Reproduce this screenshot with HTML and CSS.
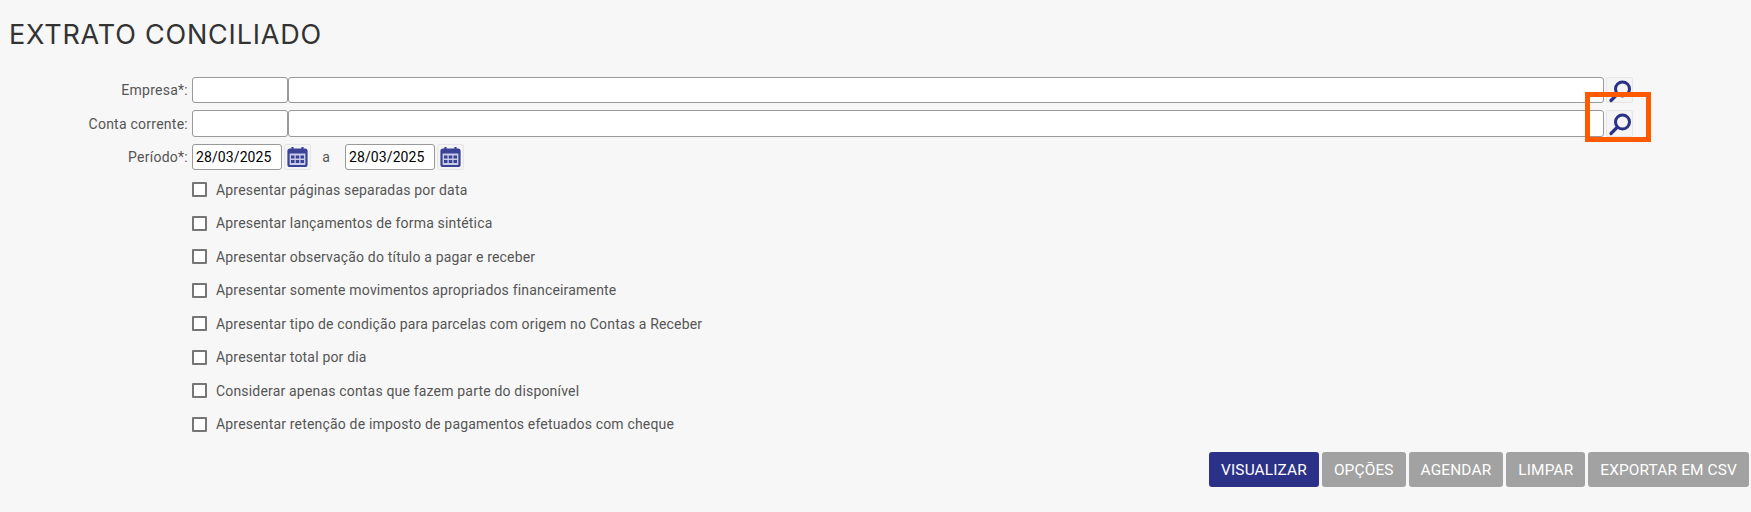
FILE: index.html
```html
<!DOCTYPE html>
<html lang="pt-BR">
<head>
<meta charset="utf-8">
<title>Extrato Conciliado</title>
<link rel="stylesheet" href="styles.css">
</head>
<body>
<svg class="defs" width="0" height="0" aria-hidden="true">
  <symbol id="lupa" viewBox="0 0 27 27">
    <circle cx="16.500" cy="12" r="7" fill="none" stroke="#2b3187" stroke-width="3"/>
    <path d="M11 17.500 5 23.500" fill="none" stroke="#2b3187" stroke-width="3.200" stroke-linecap="round"/>
  </symbol>
  <symbol id="cal" viewBox="0 0 27 27">
    <rect x="4.500" y="5.500" width="18" height="16.500" rx="1.500" fill="#c9cce6" stroke="#3a4296" stroke-width="2.200"/>
    <rect x="4.500" y="5.500" width="18" height="4" fill="#3a4296"/>
    <path d="M8.500 3v4M18.500 3v4" stroke="#3a4296" stroke-width="2.200"/>
    <path d="M7 11.500h3.500v3H7zM11.750 11.500h3.500v3h-3.500zM16.500 11.500H20v3h-3.500zM7 16h3.500v3H7zM11.750 16h3.500v3h-3.500zM16.500 16H20v3h-3.500z" fill="#3a4296"/>
  </symbol>
</svg>
<main class="page">
  <h1 class="title">EXTRATO CONCILIADO</h1>
  <form class="form">
    <div class="row row-lookup">
      <label class="label">Empresa*:</label>
      <input class="field code" type="text">
      <input class="field desc" type="text">
      <button class="icon-btn" type="button"><svg class="icon"><use href="#lupa"/></svg></button>
    </div>
    <div class="row row-lookup row-tall">
      <label class="label">Conta corrente:</label>
      <input class="field code" type="text">
      <input class="field desc" type="text">
      <button class="icon-btn" type="button"><svg class="icon"><use href="#lupa"/></svg></button>
    </div>
    <div class="row row-date">
      <label class="label">Período*:</label>
      <input class="field date" type="text" value="28/03/2025">
      <button class="icon-btn" type="button"><svg class="icon"><use href="#cal"/></svg></button>
      <span class="sep">a</span>
      <input class="field date" type="text" value="28/03/2025">
      <button class="icon-btn" type="button"><svg class="icon"><use href="#cal"/></svg></button>
    </div>
    <ul class="checks">
      <li class="check"><span class="box"></span>Apresentar páginas separadas por data</li>
      <li class="check"><span class="box"></span>Apresentar lançamentos de forma sintética</li>
      <li class="check"><span class="box"></span>Apresentar observação do título a pagar e receber</li>
      <li class="check"><span class="box"></span>Apresentar somente movimentos apropriados financeiramente</li>
      <li class="check"><span class="box"></span>Apresentar tipo de condição para parcelas com origem no Contas a Receber</li>
      <li class="check"><span class="box"></span>Apresentar total por dia</li>
      <li class="check"><span class="box"></span>Considerar apenas contas que fazem parte do disponível</li>
      <li class="check"><span class="box"></span>Apresentar retenção de imposto de pagamentos efetuados com cheque</li>
    </ul>
    <div class="actions">
      <button class="btn primary" type="button">VISUALIZAR</button>
      <button class="btn" type="button">OPÇÕES</button>
      <button class="btn" type="button">AGENDAR</button>
      <button class="btn" type="button">LIMPAR</button>
      <button class="btn" type="button">EXPORTAR EM CSV</button>
    </div>
  </form>
  <div class="highlight"></div>
</main>
</body>
</html>
```

FILE: styles.css
```css
* { box-sizing: border-box; }
html, body { margin: 0; height: 100%; }
body { background: #f7f7f7; font-family: Roboto, sans-serif; color: #444; overflow: hidden; }
.defs { position: absolute; }
.page { position: relative; height: 512px; padding: 17px 2px 0 9px; }
.title { margin: 0 0 25px; font: 400 27px/35px Inter, sans-serif; color: #333; letter-spacing: 0.8px; }
.row { display: flex; align-items: center; height: 26px; margin-bottom: 7px; }
.row-tall { height: 27px; }
.row-date { margin-bottom: 3px; }
.label { width: 183px; flex: none; padding-right: 4px; text-align: right; font-size: 14px; letter-spacing: 0.25px; color: #555; }
.field { height: 100%; border: 1px solid #999; border-radius: 3px; background: #fff; padding: 0 3px; font: 14px Roboto, sans-serif; letter-spacing: 0.1px; color: #000; outline: none; }
.code { width: 96px; }
.desc { width: 1316px; }
.date { width: 90px; }
.icon-btn { width: 27px; height: 100%; margin-left: 2px; padding: 0; border: 1px solid #e6e6e6; border-radius: 2px; background: #f4f4f4; display: flex; align-items: center; justify-content: center; }
.icon { width: 27px; height: 27px; display: block; flex: none; }
.sep { width: 34px; flex: none; padding-right: 4px; text-align: center; font-size: 14px; color: #555; }
.checks { list-style: none; margin: 0 0 11px 183px; padding: 0; }
.check { display: flex; align-items: center; height: 33.500px; font-size: 14px; letter-spacing: 0.18px; color: #555; }
.box { width: 15px; height: 15px; flex: none; margin-right: 9px; border: 2px solid #767676; border-radius: 1px; background: #fff; }
.actions { display: flex; justify-content: flex-end; gap: 3px; }
.btn { height: 35px; padding: 0 12px; border: 0; border-radius: 3px; background: #a2a2a2; color: #fff; font: 15.400px Roboto, sans-serif; letter-spacing: 0.15px; }
.primary { background: #2b3187; }
.highlight { position: absolute; left: 1585px; top: 92px; width: 66px; height: 50px; border: 5px solid #ff5a00; }
```
